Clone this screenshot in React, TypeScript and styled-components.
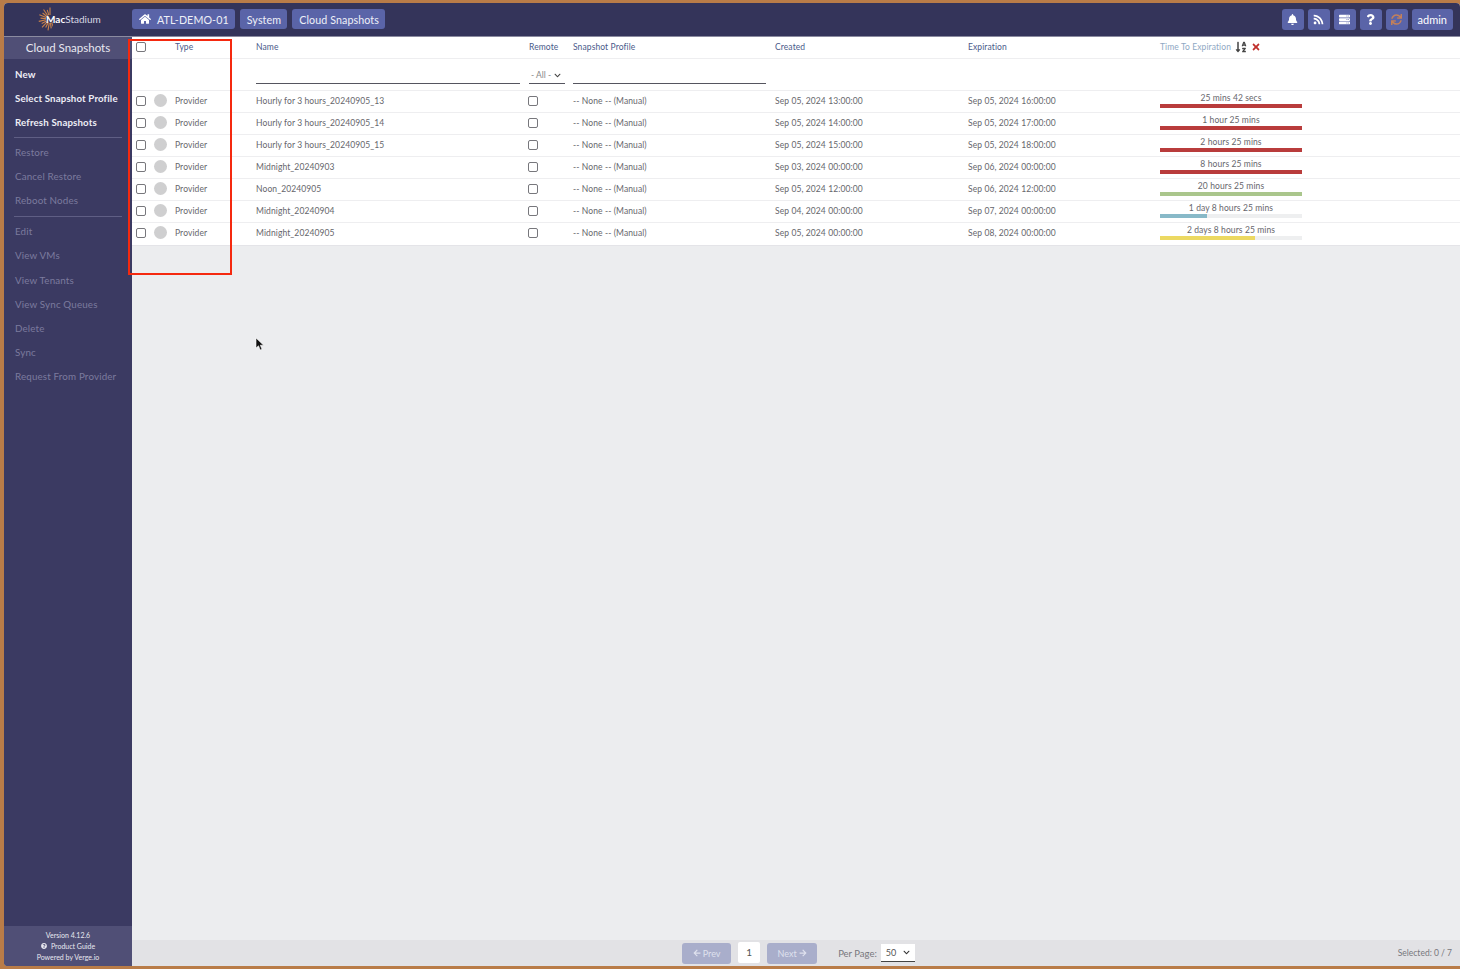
import React from 'react';
import styled, { createGlobalStyle } from 'styled-components';
import {
  FaArrowLeft,
  FaArrowRight,
  FaBell,
  FaChevronDown,
  FaHome,
  FaQuestion,
  FaQuestionCircle,
  FaRss,
  FaServer,
  FaSortAlphaDown,
  FaSync,
  FaTimes,
} from 'react-icons/fa';

const GlobalStyle = createGlobalStyle`
  html, body { margin: 0; padding: 0; height: 100%; }
  body {
    background: #b97c48;
    font-family: "Lato", "Open Sans", sans-serif;
    overflow: hidden;
  }
`;

const Frame = styled.div`
  width: 1456px;
  height: 963px;
  margin: 3px 0 0 4px;
  display: flex;
  flex-direction: column;
  border-radius: 4px 4px 0 4px;
  overflow: hidden;
  background: #ecedef;
`;

const TopBar = styled.header`
  height: 32px;
  padding: 0 7px 1px 0;
  flex: none;
  background: #34345a;
  display: flex;
  align-items: center;
  border-bottom: 1px solid #8b8ba0;
  box-sizing: content-box;
`;

const Logo = styled.div`
  width: 128px;
  flex: none;
  display: flex;
  align-items: center;
  padding-left: 33px;
  box-sizing: border-box;
  color: #d8d8e4;
  font-size: 10px;
  b { color: #fff; font-weight: 700; }
  span { margin-left: -7px; }
`;

const Crumbs = styled.nav`
  display: flex;
  gap: 5px;
`;

const Crumb = styled.a`
  height: 20px;
  padding: 0 6px 0 7px;
  display: flex;
  align-items: center;
  gap: 6px;
  border-radius: 3px;
  background: #5a64a8;
  color: #eef0f8;
  font-size: 10.7px;
  letter-spacing: 0.1px;
  svg { font-size: 12px; color: #fff; }
`;

const TopActions = styled.div`
  margin-left: auto;
  display: flex;
  gap: 4px;
`;

const ActionBtn = styled.a<{ $muted?: boolean; $wide?: boolean }>`
  height: 21px;
  min-width: 22px;
  padding: ${({ $wide }) => ($wide ? '0 6px' : '0')};
  box-sizing: border-box;
  display: flex;
  align-items: center;
  justify-content: center;
  border-radius: 3px;
  background: #5a64a8;
  color: ${({ $muted }) => ($muted ? '#c4805a' : '#fff')};
  font-size: 11px;
  svg { font-size: 11px; }
`;

const Body = styled.div`
  flex: 1;
  display: flex;
  min-height: 0;
`;

const Sidebar = styled.aside`
  width: 128px;
  flex: none;
  background: #3b3a62;
  display: flex;
  flex-direction: column;
`;

const SideTitle = styled.div`
  height: 22px;
  padding-bottom: 2px;
  box-sizing: border-box;
  display: flex;
  align-items: center;
  justify-content: center;
  background: #504f76;
  color: #e8e8f0;
  font-size: 11.5px;
`;

const SideMenu = styled.nav`
  flex: 1;
  padding-top: 3px;
`;

const SideItem = styled.a<{ $off?: boolean }>`
  display: block;
  height: 24.2px;
  line-height: 24px;
  padding-left: 11px;
  font-size: ${({ $off }) => ($off ? '9.8px' : '9.7px')};
  font-weight: ${({ $off }) => ($off ? 400 : 700)};
  letter-spacing: 0.15px;
  color: ${({ $off }) => ($off ? '#7b7b9e' : '#eeeef6')};
`;

const SideRule = styled.hr<{ $top: number }>`
  margin: ${({ $top }) => $top}px 10px 2px 10px;
  border: 0;
  border-top: 1px solid #5f5e84;
`;

const SideFoot = styled.footer`
  height: 40px;
  padding-bottom: 1px;
  box-sizing: border-box;
  background: #504f76;
  color: #e8e8f0;
  font-size: 7px;
  display: flex;
  flex-direction: column;
  align-items: center;
  justify-content: center;
  gap: 3px;
  svg { font-size: 6px; margin-right: 4px; vertical-align: -0.5px; }
`;

const Main = styled.main`
  flex: 1;
  display: flex;
  flex-direction: column;
  min-width: 0;
`;

const Table = styled.section`
  flex: 1;
  background: #ecedef;
`;

const columns = '43px 81px 273px 44px 202px 193px 192px 1fr';

const HeadRow = styled.div`
  height: 22px;
  padding-bottom: 2px;
  display: grid;
  grid-template-columns: ${columns};
  align-items: center;
  background: #fff;
  border-bottom: 1px solid #eeeef0;
  box-sizing: border-box;
`;

const HeadCell = styled.div<{ $faint?: boolean }>`
  font-size: 8.5px;
  letter-spacing: 0.1px;
  color: ${({ $faint }) => ($faint ? '#8fa8c4' : '#4a5a8a')};
  display: flex;
  align-items: center;
  gap: 4px;
`;

const FilterRow = styled.div`
  height: 32px;
  display: grid;
  grid-template-columns: ${columns};
  align-items: end;
  padding-bottom: 6px;
  background: #fff;
  border-bottom: 1px solid #eeeef0;
  box-sizing: border-box;
`;

const FilterLine = styled.div<{ $width: number }>`
  width: ${({ $width }) => $width}px;
  height: 17px;
  border-bottom: 1px solid #55555f;
  box-sizing: border-box;
  font-size: 8.5px;
  color: #888;
  display: flex;
  align-items: center;
  gap: 3px;
  padding-left: 2px;
  svg { font-size: 7px; color: #444; }
`;

const DataRow = styled.div`
  height: 22px;
  padding-bottom: 1px;
  display: grid;
  grid-template-columns: ${columns};
  align-items: center;
  background: #fff;
  border-bottom: 1px solid #eeeef0;
  box-sizing: border-box;
  font-size: 8.5px;
  letter-spacing: 0.1px;
  color: #66666c;
  &:last-child {
    height: 23px;
    padding-bottom: 2px;
    border-bottom-color: #e4e4e8;
  }
`;

const PickCell = styled.div`
  display: flex;
  align-items: center;
  gap: 8px;
  padding-left: 4px;
  margin-top: -1px;
`;

const Check = styled.input.attrs({ type: 'checkbox', readOnly: true })`
  appearance: none;
  display: block;
  width: 10px;
  height: 10px;
  margin: 0;
  flex: none;
  background: #fff;
  border: 1px solid #77777c;
  border-radius: 2px;
  box-sizing: border-box;
`;

const RemoteCell = styled.span`
  margin: -1px 0 0 -1px;
`;

const HeadPick = styled.div`
  padding-left: 4px;
  display: flex;
  align-items: center;
`;

const Dot = styled.span`
  width: 13px;
  height: 13px;
  border-radius: 50%;
  background: #cfcfd0;
  flex: none;
`;

const Meter = styled.div`
  width: 142px;
  display: flex;
  flex-direction: column;
  align-items: center;
  margin-top: -2px;
`;

const MeterLabel = styled.span`
  height: 12px;
  line-height: 12px;
  color: #66666c;
`;

const MeterTrack = styled.div`
  width: 100%;
  height: 4px;
  background: #eeeff0;
`;

const MeterFill = styled.div<{ $color: string }>`
  height: 100%;
  background: ${({ $color }) => $color};
`;

const Pager = styled.footer`
  height: 26px;
  flex: none;
  background: #e2e2e5;
  display: flex;
  align-items: center;
  justify-content: center;
  position: relative;
  padding-left: 5px;
`;

const PageBtn = styled.a<{ $wide?: boolean }>`
  width: ${({ $wide }) => ($wide ? 50 : 49)}px;
  height: 21px;
  display: flex;
  align-items: center;
  justify-content: center;
  gap: 2px;
  border-radius: 3px;
  background: #a9aecb;
  color: #dfe1ee;
  font-size: 9px;
  svg { font-size: 8px; }
`;

const PageNum = styled.span`
  width: 22px;
  height: 21px;
  margin: 0 7px 2px 7px;
  display: flex;
  align-items: center;
  justify-content: center;
  background: #fff;
  border-radius: 2px;
  color: #555;
  font-size: 10px;
`;

const PerPage = styled.div`
  display: flex;
  align-items: center;
  gap: 4px;
  margin-left: 21px;
  font-size: 9.5px;
  color: #77777c;
`;

const PerSelect = styled.div`
  width: 34px;
  height: 18px;
  background: #fff;
  border-bottom: 1px solid #444;
  box-sizing: border-box;
  display: flex;
  align-items: center;
  justify-content: space-between;
  padding: 0 5px 0 5px;
  font-size: 9px;
  color: #555;
  svg { font-size: 7px; color: #333; }
`;

const Selected = styled.span`
  position: absolute;
  right: 8px;
  font-size: 8.5px;
  color: #77777c;
`;

const Highlight = styled.div`
  position: absolute;
  left: 128px;
  top: 39px;
  width: 104px;
  height: 236px;
  border: 2px solid #f5290f;
  box-sizing: border-box;
  pointer-events: none;
`;

const Cursor = styled.svg`
  position: absolute;
  left: 255px;
  top: 337px;
`;

const rows = [
  { name: 'Hourly for 3 hours_20240905_13', created: 'Sep 05, 2024 13:00:00', expires: 'Sep 05, 2024 16:00:00', left: '25 mins 42 secs', pct: 100, color: '#b93c3c' },
  { name: 'Hourly for 3 hours_20240905_14', created: 'Sep 05, 2024 14:00:00', expires: 'Sep 05, 2024 17:00:00', left: '1 hour 25 mins', pct: 100, color: '#b93c3c' },
  { name: 'Hourly for 3 hours_20240905_15', created: 'Sep 05, 2024 15:00:00', expires: 'Sep 05, 2024 18:00:00', left: '2 hours 25 mins', pct: 100, color: '#b93c3c' },
  { name: 'Midnight_20240903', created: 'Sep 03, 2024 00:00:00', expires: 'Sep 06, 2024 00:00:00', left: '8 hours 25 mins', pct: 100, color: '#b93c3c' },
  { name: 'Noon_20240905', created: 'Sep 05, 2024 12:00:00', expires: 'Sep 06, 2024 12:00:00', left: '20 hours 25 mins', pct: 100, color: '#aac68c' },
  { name: 'Midnight_20240904', created: 'Sep 04, 2024 00:00:00', expires: 'Sep 07, 2024 00:00:00', left: '1 day 8 hours 25 mins', pct: 33, color: '#88b9c8' },
  { name: 'Midnight_20240905', created: 'Sep 05, 2024 00:00:00', expires: 'Sep 08, 2024 00:00:00', left: '2 days 8 hours 25 mins', pct: 67, color: '#ecd962' },
];

const enabledItems = ['New', 'Select Snapshot Profile', 'Refresh Snapshots'];
const restoreItems = ['Restore', 'Cancel Restore', 'Reboot Nodes'];
const otherItems = ['Edit', 'View VMs', 'View Tenants', 'View Sync Queues', 'Delete', 'Sync', 'Request From Provider'];

const LogoMark = () => {
  const rays = Array.from({ length: 15 }, (_, i) => 90 + i * 17);
  return (
    <svg width="16" height="24" viewBox="0 0 16 24">
      {rays.map((deg) => {
        const a = (deg * Math.PI) / 180;
        const long = deg % 2 === 0 ? 11.5 : 9.5;
        return (
          <line
            key={deg}
            x1={13 + Math.cos(a) * 4}
            y1={12 - Math.sin(a) * 4}
            x2={13 + Math.cos(a) * long}
            y2={12 - Math.sin(a) * long}
            stroke="#c9824a"
            strokeWidth="1.1"
          />
        );
      })}
    </svg>
  );
};

const App = () => {
  return (
    <>
      <GlobalStyle />
      <Frame>
        <TopBar>
          <Logo>
            <LogoMark />
            <span>
              <b>Mac</b>Stadium
            </span>
          </Logo>
          <Crumbs>
            <Crumb>
              <FaHome />
              ATL-DEMO-01
            </Crumb>
            <Crumb>System</Crumb>
            <Crumb>Cloud Snapshots</Crumb>
          </Crumbs>
          <TopActions>
            <ActionBtn><FaBell /></ActionBtn>
            <ActionBtn><FaRss /></ActionBtn>
            <ActionBtn><FaServer /></ActionBtn>
            <ActionBtn><FaQuestion /></ActionBtn>
            <ActionBtn $muted><FaSync /></ActionBtn>
            <ActionBtn $wide>admin</ActionBtn>
          </TopActions>
        </TopBar>
        <Body>
          <Sidebar>
            <SideTitle>Cloud Snapshots</SideTitle>
            <SideMenu>
              {enabledItems.map((item) => (
                <SideItem key={item}>{item}</SideItem>
              ))}
              <SideRule $top={2} />
              {restoreItems.map((item) => (
                <SideItem key={item} $off>{item}</SideItem>
              ))}
              <SideRule $top={4} />
              {otherItems.map((item) => (
                <SideItem key={item} $off>{item}</SideItem>
              ))}
            </SideMenu>
            <SideFoot>
              <span>Version 4.12.6</span>
              <span><FaQuestionCircle />Product Guide</span>
              <span>Powered by Verge.io</span>
            </SideFoot>
          </Sidebar>
          <Main>
            <Table>
              <HeadRow>
                <HeadPick><Check /></HeadPick>
                <HeadCell>Type</HeadCell>
                <HeadCell>Name</HeadCell>
                <HeadCell>Remote</HeadCell>
                <HeadCell>Snapshot Profile</HeadCell>
                <HeadCell>Created</HeadCell>
                <HeadCell>Expiration</HeadCell>
                <HeadCell $faint>
                  Time To Expiration
                  <FaSortAlphaDown size={12} color="#444" />
                  <FaTimes size={10} color="#c0302c" />
                </HeadCell>
              </HeadRow>
              <FilterRow>
                <span />
                <span />
                <FilterLine $width={264} />
                <FilterLine $width={36}>- All - <FaChevronDown /></FilterLine>
                <FilterLine $width={193} />
              </FilterRow>
              {rows.map((row) => (
                <DataRow key={row.name}>
                  <PickCell>
                    <Check />
                    <Dot />
                  </PickCell>
                  <span>Provider</span>
                  <span>{row.name}</span>
                  <RemoteCell><Check /></RemoteCell>
                  <span>-- None -- (Manual)</span>
                  <span>{row.created}</span>
                  <span>{row.expires}</span>
                  <Meter>
                    <MeterLabel>{row.left}</MeterLabel>
                    <MeterTrack>
                      <MeterFill $color={row.color} style={{ width: `${row.pct}%` }} />
                    </MeterTrack>
                  </Meter>
                </DataRow>
              ))}
            </Table>
            <Pager>
              <PageBtn><FaArrowLeft />Prev</PageBtn>
              <PageNum>1</PageNum>
              <PageBtn $wide>Next<FaArrowRight /></PageBtn>
              <PerPage>
                Per Page:
                <PerSelect>50 <FaChevronDown /></PerSelect>
              </PerPage>
              <Selected>Selected: 0 / 7</Selected>
            </Pager>
          </Main>
        </Body>
      </Frame>
      <Highlight />
      <Cursor width="10" height="14" viewBox="0 0 10 14">
        <path d="M1 1v10l2.5-2.2L5.2 13l1.8-.8-1.7-4H8.6z" fill="#111" stroke="#fff" strokeWidth="0.6" />
      </Cursor>
    </>
  );
};

export default App;
